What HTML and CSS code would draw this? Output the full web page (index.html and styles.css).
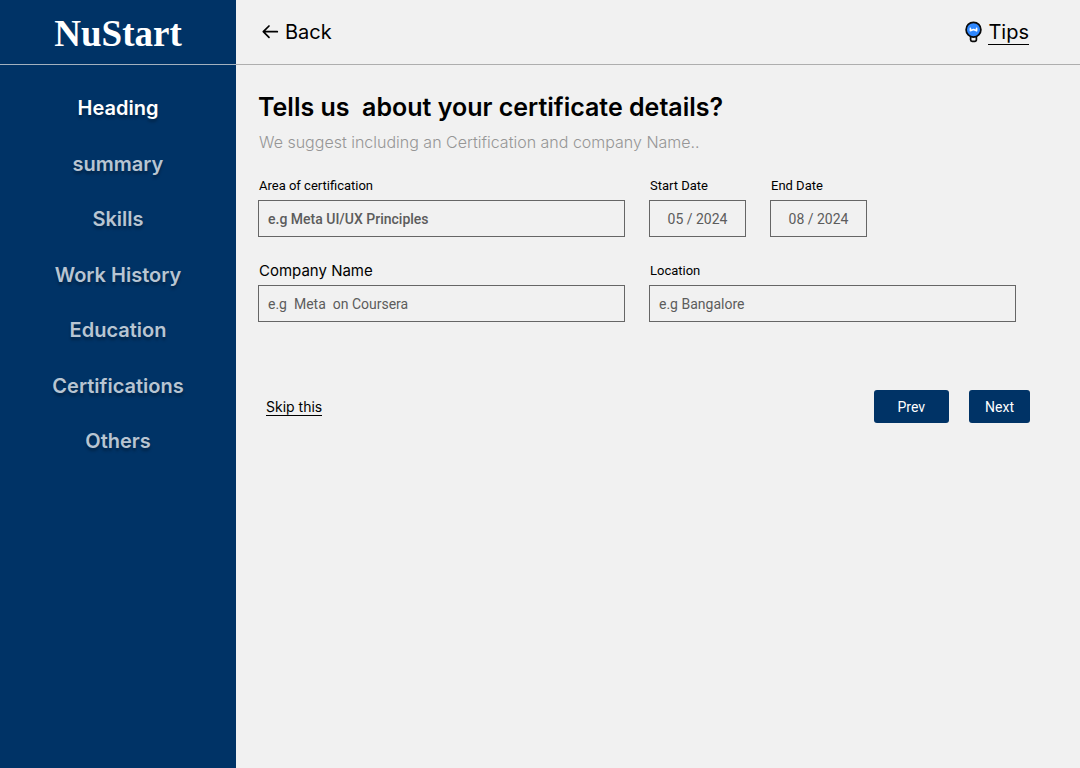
FILE: index.html
```html
<!DOCTYPE html>
<html lang="en">
<head>
<meta charset="utf-8">
<meta name="viewport" content="width=device-width, initial-scale=1">
<title>NuStart</title>
<link rel="stylesheet" href="styles.css">
</head>
<body>
<div class="app">
  <aside class="sidebar">
    <div class="brand">NuStart</div>
    <nav class="steps">
      <a class="step active" href="#heading">Heading</a>
      <a class="step" href="#summary">summary</a>
      <a class="step" href="#skills">Skills</a>
      <a class="step" href="#work">Work History</a>
      <a class="step" href="#education">Education</a>
      <a class="step" href="#certifications">Certifications</a>
      <a class="step" href="#others">Others</a>
    </nav>
  </aside>
  <div class="page">
    <header class="topbar">
      <a class="back" href="#back">
        <svg width="17" height="16" viewBox="0 0 17 16" fill="none" stroke="#000" stroke-width="1.7" stroke-linecap="round" stroke-linejoin="round" aria-hidden="true"><path d="M15.3 7.7H1.5M7 2L1.3 7.7 7 13.4"/></svg>
        <span>Back</span>
      </a>
      <a class="tips" href="#tips">
        <svg width="17" height="22" viewBox="0 0 17 22" aria-hidden="true">
          <path d="M5.6 15.5h5.8v3.2a1.6 1.6 0 0 1-1.6 1.6H7.2a1.6 1.6 0 0 1-1.6-1.6z" fill="#f1f1f1" stroke="#0a0a0a" stroke-width="1.7"/>
          <circle cx="8.5" cy="8.7" r="7.4" fill="#2f88ff" stroke="#0a0a0a" stroke-width="1.7"/>
          <path d="M5.4 7.4v2.4l3.1-1.2 3.1 1.2V7.4" fill="none" stroke="#fff" stroke-width="1.6" stroke-linecap="round" stroke-linejoin="round"/>
        </svg>
        <span class="tips-text">Tips</span>
      </a>
    </header>
    <main class="content">
      <h1 class="title">Tells us&nbsp; about your certificate details?</h1>
      <p class="subtitle">We suggest including an Certification and company Name..</p>
      <form>
        <div class="fields">
          <div class="field">
            <label for="area">Area of certification</label>
            <input class="medium" id="area" type="text" placeholder="e.g Meta UI/UX Principles">
          </div>
          <div class="dates">
            <div class="field">
              <label for="start">Start Date</label>
              <input class="date" id="start" type="text" placeholder="05 / 2024">
            </div>
            <div class="field">
              <label for="end">End Date</label>
              <input class="date" id="end" type="text" placeholder="08 / 2024">
            </div>
          </div>
          <div class="field">
            <label class="company" for="company">Company Name</label>
            <input id="company" type="text" placeholder="e.g&nbsp; Meta&nbsp; on Coursera">
          </div>
          <div class="field">
            <label for="location">Location</label>
            <input id="location" type="text" placeholder="e.g Bangalore">
          </div>
        </div>
        <div class="actions">
          <a class="skip" href="#skip">Skip this</a>
          <div class="buttons">
            <button class="prev" type="button">Prev</button>
            <button class="next" type="submit">Next</button>
          </div>
        </div>
      </form>
    </main>
  </div>
</div>
</body>
</html>
```
FILE: styles.css
```css
* {
  box-sizing: border-box;
}

body {
  margin: 0;
  background: #f1f1f1;
  color: #000;
  font-family: Roboto, "Liberation Sans", sans-serif;
  font-size: 14px;
}

a {
  color: inherit;
  text-decoration: none;
}

.app {
  display: grid;
  grid-template-columns: 236px 1fr;
  min-height: 100vh;
}

.sidebar {
  background: #003366;
}

.brand {
  display: flex;
  align-items: center;
  justify-content: center;
  height: 65px;
  padding-top: 2px;
  border-bottom: 1px solid #a3b1bf;
  color: #fff;
  font-family: "Liberation Serif", serif;
  font-size: 37px;
  font-weight: 700;
}

.steps {
  display: flex;
  flex-direction: column;
  align-items: center;
  justify-content: space-between;
  min-height: 357px;
  margin-top: 31px;
}

.step {
  color: #b8c5d2;
  font-family: Inter, sans-serif;
  font-size: 20px;
  font-weight: 600;
  line-height: 24px;
  text-shadow: 0 3px 3px rgba(0, 0, 0, 0.3);
}

.step.active {
  color: #fff;
}

.topbar {
  display: flex;
  align-items: center;
  justify-content: space-between;
  height: 65px;
  padding: 0 51px 0 26px;
  border-bottom: 1px solid #aeaeae;
  font-family: Inter, sans-serif;
  font-size: 20px;
  line-height: 24px;
}

.back,
.tips {
  display: flex;
  align-items: center;
  gap: 6px;
}

.tips-text {
  border-bottom: 1px solid #000;
}

.content {
  padding: 26px 50px 24px 22px;
}

.title {
  margin: 0;
  font-family: Inter, sans-serif;
  font-size: 25px;
  font-weight: 600;
  line-height: 32px;
}

.subtitle {
  margin: 9px 0 24px;
  padding-left: 1px;
  color: #969696;
  font-family: Inter, sans-serif;
  font-size: 16px;
  font-weight: 300;
  line-height: 20px;
}

.fields {
  display: grid;
  grid-template-columns: 1fr 1fr;
  gap: 24px;
  margin-right: 14px;
}

.dates {
  display: flex;
  gap: 24px;
}

.field {
  display: flex;
  flex-direction: column;
  gap: 4px;
}

label {
  padding-left: 1px;
  font-size: 13px;
  line-height: 20px;
}

.company {
  font-family: Inter, sans-serif;
  font-size: 15px;
}

input {
  width: 100%;
  height: 37px;
  padding: 0 9px;
  border: 1px solid #666;
  border-radius: 0;
  background: transparent;
  color: #555;
  font: inherit;
}

input::placeholder {
  color: #5c5c5c;
  opacity: 1;
}

.medium {
  font-weight: 500;
}

.date {
  width: 97px;
  text-align: center;
}

.actions {
  display: flex;
  align-items: center;
  justify-content: space-between;
  margin-top: 68px;
  padding-left: 8px;
}

.skip {
  border-bottom: 1px solid #000;
  font-family: Inter, sans-serif;
  line-height: 17px;
}

.buttons {
  display: flex;
  gap: 20px;
}

button {
  height: 33px;
  border: 0;
  border-radius: 3px;
  background: #003366;
  color: #fff;
  font: inherit;
}

.prev {
  padding: 0 24px;
}

.next {
  padding: 0 16px;
}
```
